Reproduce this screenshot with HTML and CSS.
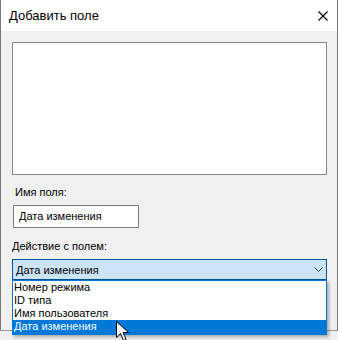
FILE: index.html
```html
<!DOCTYPE html>
<html lang="ru">
<head>
  <meta charset="UTF-8" />
  <title>Добавить поле</title>
  <link rel="stylesheet" href="styles.css">
</head>
<body>
  <div class="window">
    <div class="titlebar">
      <span class="title">Добавить поле</span>
      <svg class="close" width="10" height="10" viewBox="0 0 10 10">
        <path d="M0.5 0.5 L9.5 9.5 M9.5 0.5 L0.5 9.5" stroke="#000" stroke-width="1.1" fill="none"/>
      </svg>
    </div>
    <div class="content">
      <div class="listbox"></div>
      <label class="field-label">Имя поля:</label>
      <div class="textbox">Дата изменения</div>
      <label class="action-label">Действие с полем:</label>
      <div class="combo-wrap">
        <div class="combo">
          <span>Дата изменения</span>
          <svg class="chevron" width="9" height="5" viewBox="0 0 9 5">
            <path d="M0.5 0.5 L4.5 4.5 L8.5 0.5" stroke="#333" stroke-width="1" fill="none"/>
          </svg>
        </div>
        <ul class="dropdown">
          <li>Номер режима</li>
          <li>ID типа</li>
          <li>Имя пользователя</li>
          <li class="selected">Дата изменения</li>
        </ul>
        <svg class="cursor" width="14" height="22" viewBox="0 0 14 22">
          <path d="M0.5 0.5 L0.5 16.5 L4.5 12.5 L7.5 19.5 L10 18.5 L7 11.5 L12.5 11.5 Z" fill="#fff" stroke="#000" stroke-width="1"/>
        </svg>
      </div>
    </div>
  </div>
</body>
</html>
```

FILE: styles.css
```css
* { box-sizing: border-box; margin: 0; padding: 0; }
body {
  font-family: 'Liberation Sans', Arial, sans-serif;
  font-size: 11px;
  color: #000;
  background: #f0f0f0;
  width: 338px;
  height: 340px;
  overflow: hidden;
}
.window {
  width: 338px;
  height: 331px;
  border-left: 1px solid #777;
  border-right: 1px solid #777;
  border-bottom: 1px solid #999;
  background: #f0f0f0;
}
.titlebar {
  height: 31px;
  background: #fff;
  display: flex;
  align-items: center;
  justify-content: space-between;
  padding: 0 9px 0 8px;
}
.title {
  font-size: 13px;
  line-height: 16px;
  margin-top: 1px;
}
.close { margin-top: 0; }
.content {
  padding: 11px 10px 0 11px;
}
.listbox {
  height: 133px;
  width: 315px;
  background: #fff;
  border: 1px solid #828790;
}
.field-label {
  display: block;
  margin: 9px 0 0 3px;
  line-height: 16px;
}
.textbox {
  margin: 5px 0 0 1px;
  width: 126px;
  height: 23px;
  border: 1px solid #7a7a7a;
  background: #fff;
  padding: 0 0 0 5px;
  line-height: 21px;
}
.action-label {
  display: block;
  margin: 10px 0 0 0;
  line-height: 16px;
}
.combo-wrap {
  position: relative;
  margin-top: 5px;
  width: 315px;
}
.combo {
  height: 21px;
  background: #cce4f7;
  border: 1px solid #005499;
  display: flex;
  align-items: center;
  justify-content: space-between;
  padding: 1px 3px 0 3px;
}
.chevron { margin-top: -1px; }
.dropdown {
  position: absolute;
  left: 0;
  top: 21px;
  width: 315px;
  list-style: none;
  background: #fff;
  border: 1px solid #0078d7;
  box-shadow: 2px 2px 3px rgba(0, 0, 0, 0.3);
}
.dropdown li {
  height: 13px;
  line-height: 13px;
  padding-left: 1px;
}
.dropdown li.selected {
  background: #0078d7;
  color: #fff;
  height: 14px;
}
.cursor {
  position: absolute;
  left: 104px;
  top: 62px;
}
```
